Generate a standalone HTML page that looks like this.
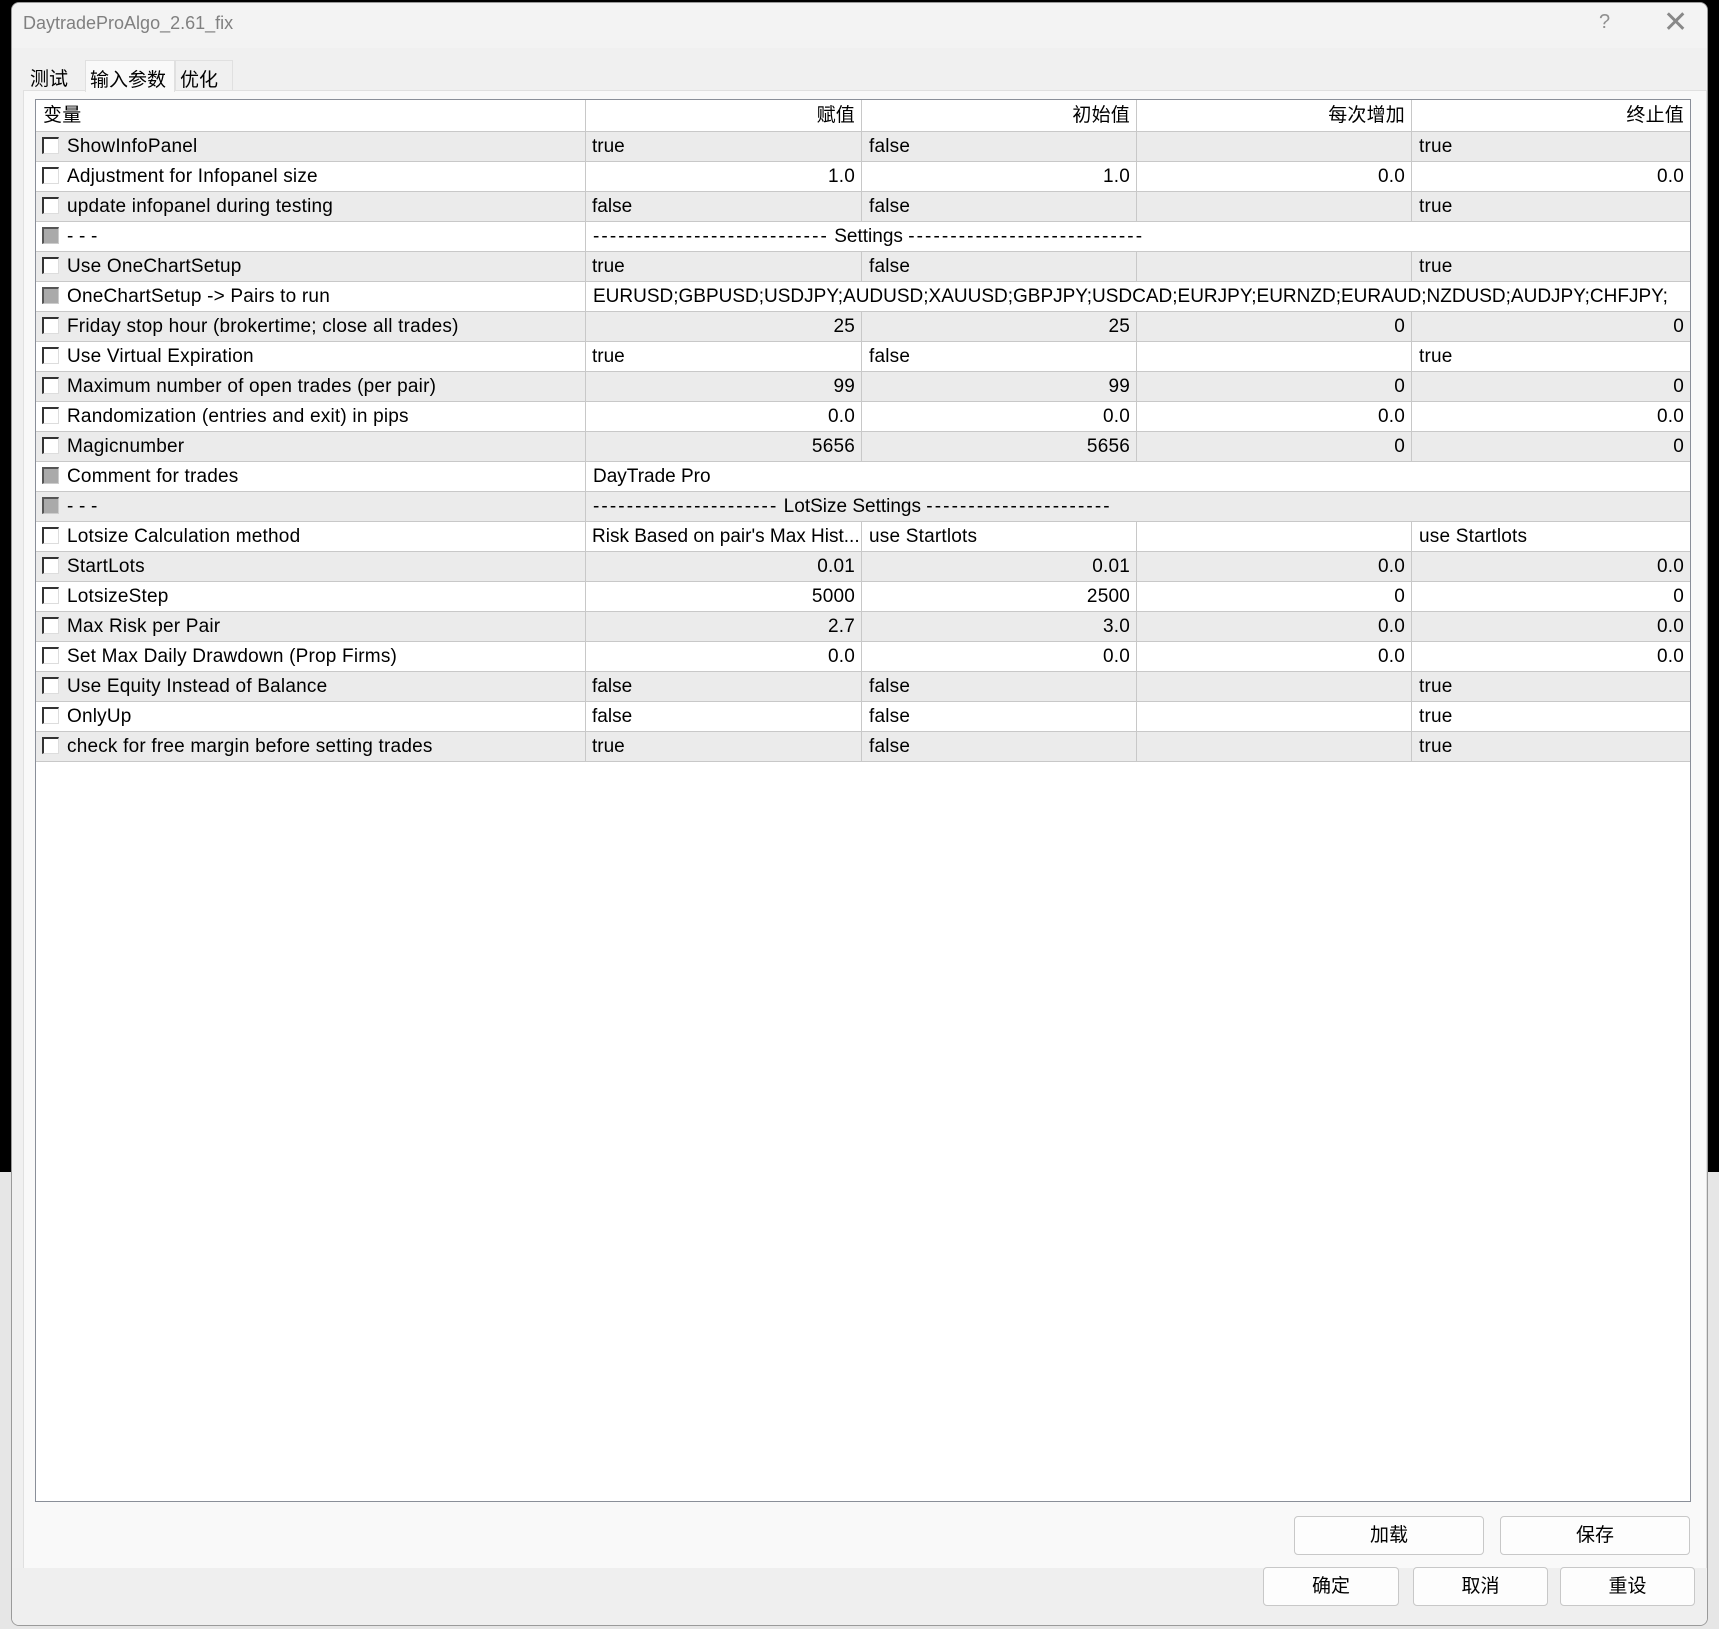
<!DOCTYPE html>
<html><head><meta charset="utf-8"><style>
*{margin:0;padding:0;box-sizing:border-box}
body{width:1719px;height:1629px;background:#000;position:relative;overflow:hidden;font-family:"Liberation Sans","Noto Sans CJK SC",sans-serif;font-size:19px;color:#000}
.lowbg{position:absolute;left:0;top:1172px;width:1719px;height:457px;background:#e6e6e6}
.dlg{position:absolute;left:11px;top:2px;width:1697px;height:1624px;background:#f0f0f0;border:1px solid #9a9a9a;border-radius:8px;overflow:hidden}
.title{position:absolute;left:0;top:0;width:100%;height:45px;background:#f3f3f3}
.title span{position:absolute;left:11px;top:10px;color:#808080;font-size:18px}
.q{position:absolute;left:1587px;top:8px;color:#909090;font-size:20px}
.x{position:absolute;left:1651px;top:2px;color:#888;font-size:30px;font-weight:200}
.tab{position:absolute;top:57px;height:31px;font-size:19px;padding:4px 4px;white-space:nowrap}
.panel{position:absolute;left:11px;top:87px;width:1684px;height:1480px;background:#f9f9f9;border:1px solid #e0e0e0}
.tbl{position:absolute;left:23px;top:96px;width:1656px;height:1403px;background:#fff;border:1px solid #8a8f99}
.row{position:absolute;left:0;width:1654px;height:30px;border-bottom:1px solid #c8c8c8}
.row.g{background:#ebebeb}
.c{position:absolute;top:0;height:29px;line-height:29px;border-right:1px solid #c8c8c8;white-space:nowrap;overflow:hidden;padding:0 7px;letter-spacing:0.2px}
.r{text-align:right;padding-right:6px}
.cb{position:absolute;left:6px;top:5px;width:17px;height:17px;border:2px solid #333;border-right:1px solid #ddd;border-bottom:1px solid #ddd;background:#fff}
.cb.d{background:#aaa;border-color:#555 #ccc #ccc #555}
.ds{letter-spacing:2.1px}
.btn{position:absolute;height:39px;background:#fdfdfd;border:1px solid #c8c8c8;border-radius:4px;text-align:center;line-height:37px;font-size:19px}
.bot{position:absolute;left:0;top:1565px;width:100%;height:60px;background:#efefef}
</style></head><body>
<div class="lowbg"></div>
<div class="dlg">
<div class="title"><span>DaytradeProAlgo_2.61_fix</span><div class="q">?</div><div class="x">✕</div></div>
<div class="panel"></div>
<div class="tab" style="left:14px">测试</div>
<div class="tab" style="left:73px;background:#f9f9f9;border:1px solid #e0e0e0;border-bottom:none;height:32px;width:90px">输入参数</div>
<div class="tab" style="left:163px;border:1px solid #e0e0e0;border-bottom:none;width:58px">优化</div>
<div class="bot"></div>
<div class="tbl" id="t"></div>
<div class="btn" style="left:1282px;top:1513px;width:190px">加载</div>
<div class="btn" style="left:1488px;top:1513px;width:190px">保存</div>
<div class="btn" style="left:1251px;top:1564px;width:136px">确定</div>
<div class="btn" style="left:1401px;top:1564px;width:135px">取消</div>
<div class="btn" style="left:1548px;top:1564px;width:135px">重设</div>
</div>
<script>
var X=[0,550,826,1101,1376,1654];
var D28='<span class="ds">----------------------------</span>',D21='<span class="ds">----------------------</span>';
var rows=[
["ShowInfoPanel","true","false","","true",0],
["Adjustment for Infopanel size","1.0","1.0","0.0","0.0",1],
["update infopanel during testing","false","false","","true",0],
["- - -","S:"+D28+" Settings "+D28,"","","",2],
["Use OneChartSetup","true","false","","true",0],
["OneChartSetup -> Pairs to run","S:EURUSD;GBPUSD;USDJPY;AUDUSD;XAUUSD;GBPJPY;USDCAD;EURJPY;EURNZD;EURAUD;NZDUSD;AUDJPY;CHFJPY;","","","",3],
["Friday stop hour (brokertime; close all trades)","25","25","0","0",1],
["Use Virtual Expiration","true","false","","true",0],
["Maximum number of open trades (per pair)","99","99","0","0",1],
["Randomization (entries and exit) in pips","0.0","0.0","0.0","0.0",1],
["Magicnumber","5656","5656","0","0",1],
["Comment for trades","S:DayTrade Pro","","","",3],
["- - -","S:"+D21+" LotSize Settings "+D21,"","","",2],
["Lotsize Calculation method","Risk Based on pair's Max Hist...","use Startlots","","use Startlots",0],
["StartLots","0.01","0.01","0.0","0.0",1],
["LotsizeStep","5000","2500","0","0",1],
["Max Risk per Pair","2.7","3.0","0.0","0.0",1],
["Set Max Daily Drawdown (Prop Firms)","0.0","0.0","0.0","0.0",1],
["Use Equity Instead of Balance","false","false","","true",0],
["OnlyUp","false","false","","true",0],
["check for free margin before setting trades","true","false","","true",0]];
var h='<div class="row" style="top:0;height:32px;background:#fff"><div class="c" style="left:0;width:550px;height:31px;line-height:31px">变量</div>';
var hd=["赋值","初始值","每次增加","终止值"];
for(var i=0;i<4;i++)h+='<div class="c r" style="left:'+X[i+1]+'px;width:'+(X[i+2]-X[i+1])+'px;height:31px;line-height:31px'+(i==3?';border-right:none':'')+'">'+hd[i]+'</div>';
h+='</div>';
rows.forEach(function(r,k){
var t=32+k*30;h+='<div class="row'+(k%2==0?' g':'')+'" style="top:'+t+'px">';
h+='<div class="c" style="left:0;width:550px;padding-left:31px"><div class="cb'+(r[5]>=2?' d':'')+'"></div>'+r[0].replace(/</g,'&lt;').replace(/>/g,'&gt;')+'</div>';
if(typeof r[1]=="string"&&r[1].indexOf("S:")==0){h+='<div class="c" style="left:550px;width:1104px;border-right:none;letter-spacing:0">'+r[1].slice(2)+'</div>';}
else for(var i=0;i<4;i++){h+='<div class="c'+(r[5]==1?' r':'')+'" style="left:'+X[i+1]+'px;width:'+(X[i+2]-X[i+1])+'px'+(i==3?';border-right:none':'')+(i==0&&r[5]==0?';letter-spacing:0;padding-left:6px':'')+'">'+r[i+1]+'</div>';}
h+='</div>';});
document.getElementById('t').innerHTML=h;
</script>
</body></html>
